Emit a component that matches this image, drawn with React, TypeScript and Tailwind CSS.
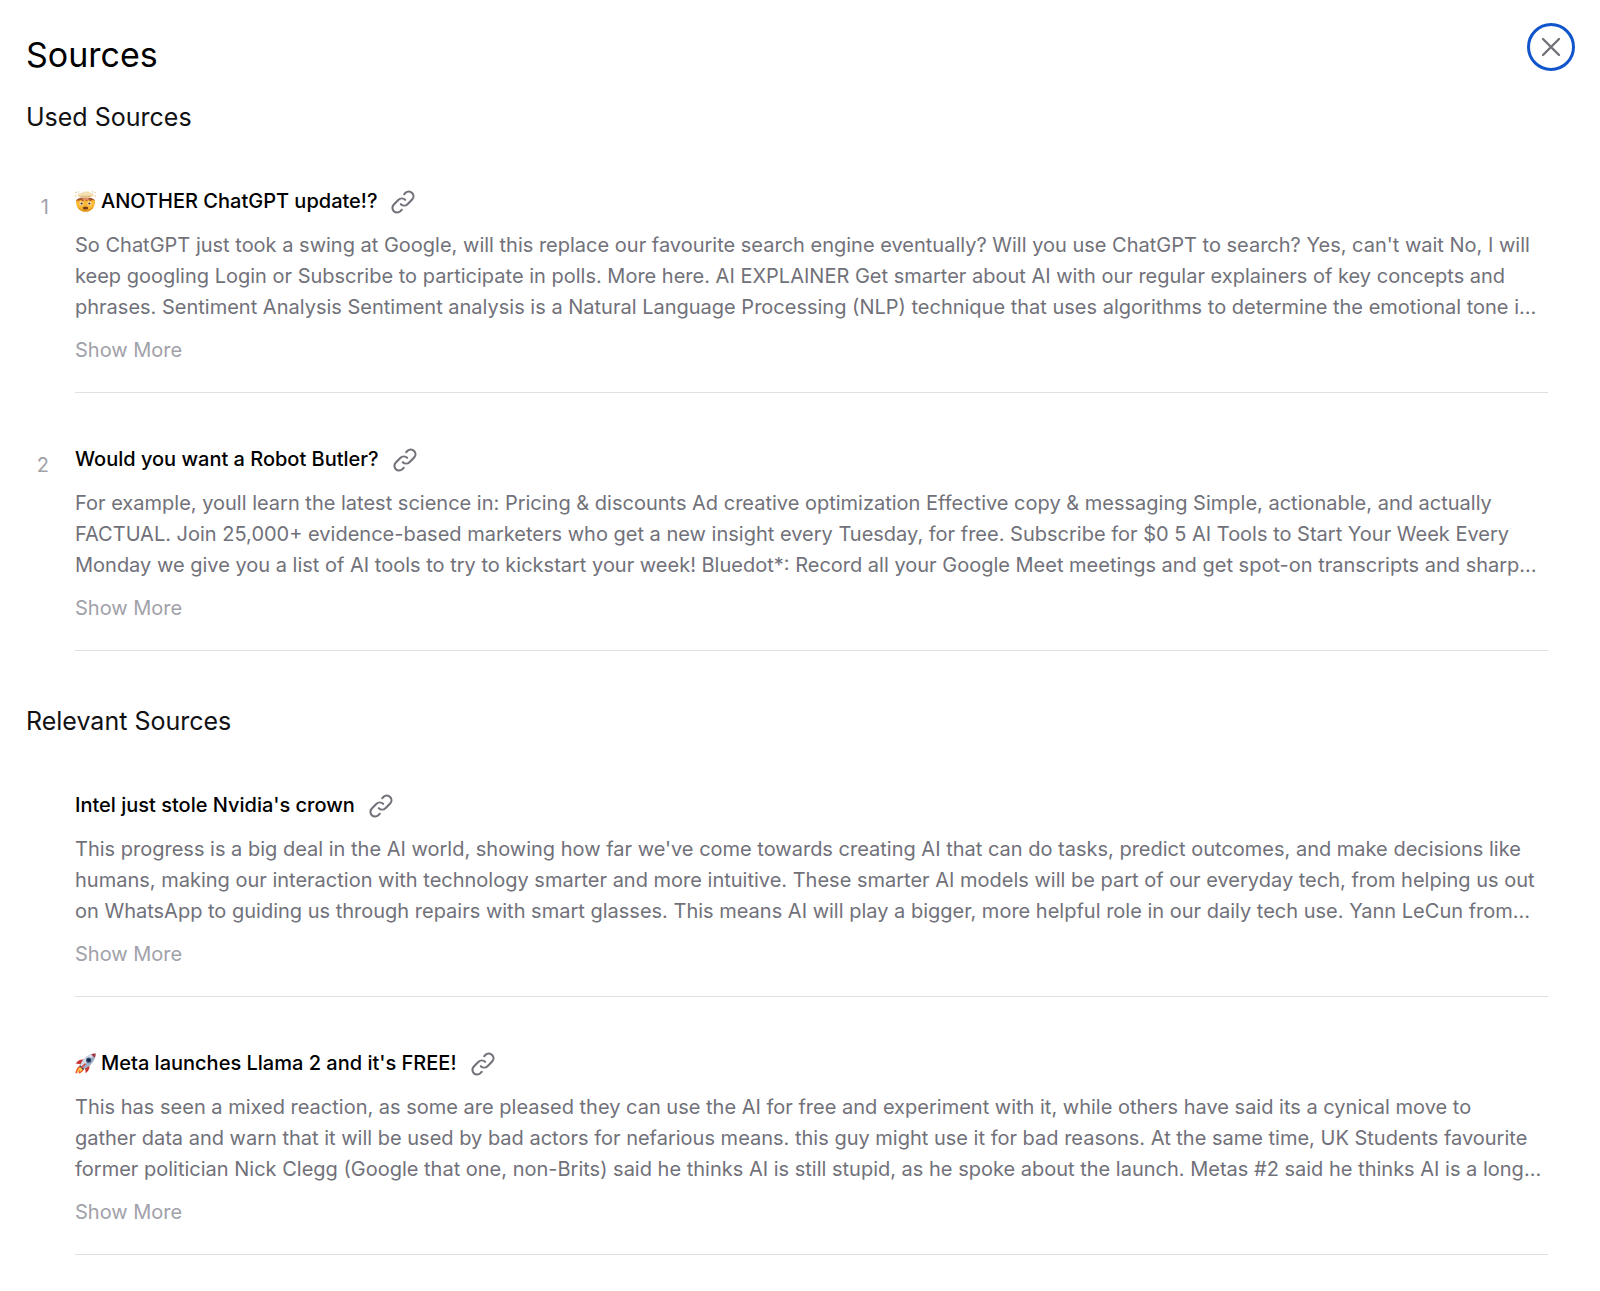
import React from 'react';

type Source = {
  id: number;
  rank?: number;
  icon?: 'mindblown' | 'rocket';
  title: string;
  excerpt: string[];
};

const USED_SOURCES: Source[] = [
  {
    id: 1,
    rank: 1,
    icon: 'mindblown',
    title: 'ANOTHER ChatGPT update!?',
    excerpt: [
      "So ChatGPT just took a swing at Google, will this replace our favourite search engine eventually? Will you use ChatGPT to search? Yes, can't wait No, I will",
      'keep googling Login or Subscribe to participate in polls. More here. AI EXPLAINER Get smarter about AI with our regular explainers of key concepts and',
      'phrases. Sentiment Analysis Sentiment analysis is a Natural Language Processing (NLP) technique that uses algorithms to determine the emotional tone i…',
    ],
  },
  {
    id: 2,
    rank: 2,
    title: 'Would you want a Robot Butler?',
    excerpt: [
      'For example, youll learn the latest science in: Pricing & discounts Ad creative optimization Effective copy & messaging Simple, actionable, and actually',
      'FACTUAL. Join 25,000+ evidence-based marketers who get a new insight every Tuesday, for free. Subscribe for $0 5 AI Tools to Start Your Week Every',
      'Monday we give you a list of AI tools to try to kickstart your week! Bluedot*: Record all your Google Meet meetings and get spot-on transcripts and sharp…',
    ],
  },
];

const RELEVANT_SOURCES: Source[] = [
  {
    id: 3,
    title: "Intel just stole Nvidia's crown",
    excerpt: [
      "This progress is a big deal in the AI world, showing how far we've come towards creating AI that can do tasks, predict outcomes, and make decisions like",
      'humans, making our interaction with technology smarter and more intuitive. These smarter AI models will be part of our everyday tech, from helping us out',
      'on WhatsApp to guiding us through repairs with smart glasses. This means AI will play a bigger, more helpful role in our daily tech use. Yann LeCun from…',
    ],
  },
  {
    id: 4,
    icon: 'rocket',
    title: "Meta launches Llama 2 and it's FREE!",
    excerpt: [
      'This has seen a mixed reaction, as some are pleased they can use the AI for free and experiment with it, while others have said its a cynical move to',
      'gather data and warn that it will be used by bad actors for nefarious means. this guy might use it for bad reasons. At the same time, UK Students favourite',
      'former politician Nick Clegg (Google that one, non-Brits) said he thinks AI is still stupid, as he spoke about the launch. Metas #2 said he thinks AI is a long…',
    ],
  },
];

const MindBlown = () => (
  <svg viewBox="0 0 20 20" className="w-[21px] h-[21px] shrink-0" aria-hidden="true">
    <path d="M.9 8.800C.5 15.600 4.600 19.800 10 19.800s9.500-4.200 9.100-11C17 7.300 13.500 6.600 10 6.600S3 7.300.9 8.800z" fill="#f9b934" />
    <path d="M2 14.500c1.600 3.400 4.500 5.300 8 5.300s6.400-1.900 8-5.300c-2 2.300-4.700 3.400-8 3.400s-6-1.100-8-3.400z" fill="#e39322" />
    <path d="M1 9C2.500 6.800 5.600 6 10 6s7.500.8 9 3l-2.600-.5-1.700 1.200-2-1.300-1.700 1.300-1.900-1.400-1.800 1.400-2-1.300-1.700.9z" fill="#a5552c" />
    <path d="M7.600 4.500h4.800l.8 3.800-3 .8-3.200-.8z" fill="#dd8f66" />
    <path d="M2.600 4.400C2.500 2.600 4.700 1.500 6.200 1.900 7.200.4 9.200 0 10.300.8c1.300-.8 3.600-.3 4.100.9 1.800-.3 3.400.9 3.100 2.500-.2 1.400-1.900 2-3.200 1.600-1.200.9-2.700.9-4 .2-1.400.8-3.200.6-4-.3-1.700.5-3.600 0-3.700-1.300z" fill="#f3dfb2" />
    <path d="M4.300 4.900c1.200.7 2.600.5 3.300-.3.900 1 3 1.100 4 .1.900.7 2.500.7 3.700-.2" fill="none" stroke="#d5aa6a" strokeWidth=".8" />
    <g fill="#e6bd78">
      <circle cx=".9" cy="1.300" r=".7" />
      <circle cx=".8" cy="4.800" r=".7" />
      <circle cx="3.300" cy=".8" r=".6" />
      <circle cx="19.100" cy="1.300" r=".7" />
      <circle cx="19.200" cy="4.800" r=".7" />
      <circle cx="16.700" cy=".8" r=".6" />
    </g>
    <circle cx="6.200" cy="12" r="1.900" fill="#fff3d6" />
    <circle cx="13.800" cy="12" r="1.900" fill="#fff3d6" />
    <circle cx="6.300" cy="12" r="1.100" fill="#5c2e10" />
    <circle cx="13.700" cy="12" r="1.100" fill="#5c2e10" />
    <ellipse cx="10" cy="16.200" rx="2.700" ry="1.500" fill="#7a3c14" />
  </svg>
);

const Rocket = () => (
  <svg viewBox="0 0 20 20" className="w-[21px] h-[21px] shrink-0" aria-hidden="true">
    <path d="M5.800 11.800C3 12 .8 15.500.3 19.500c2.300-.4 3-1.700 3.400-2.600-.1 1.200-.3 2-.1 2.800 3-.9 5.200-3.200 5.300-5.600z" fill="#f0592b" />
    <path d="M5.800 13.200c-1.800.6-3.300 2.600-4 5 1.500-.6 2.300-1.600 2.800-2.600.1.900 0 1.700-.2 2.500 1.800-.8 3-2.200 3.300-3.700z" fill="#ffd04a" />
    <path d="M8.600 6.500C5.800 5.800 2.800 7 .7 10.300c1.900-.3 3.500-.2 4.800.6z" fill="#c93432" />
    <path d="M13.600 11.600c.6 2.700-.4 5.600-3.700 7.800.3-1.900.2-3.600-.7-4.900z" fill="#c93432" />
    <path d="M5 11.500C7.200 5.600 12.600.5 19.600.4 19.700 7 14.800 12.600 8.800 15.200z" fill="#9eb0c6" />
    <path d="M5 11.500C7.200 5.600 12.600.5 19.600.4L6.800 13.300z" fill="#d3dce6" />
    <path d="M15.300 1.200c1.400-.5 2.800-.8 4.300-.8 0 1.400-.2 2.800-.7 4.200z" fill="#a93038" />
    <circle cx="13" cy="6.900" r="2.500" fill="#38537c" />
    <circle cx="13" cy="6.900" r="1.400" fill="#16253d" />
    <path d="M4.700 11.500l4.200 4.100-1.200.6-3.500-3.500z" fill="#3f4d61" />
    <path d="M9.400 9.700l1 .9-3.900 4-1-.9z" fill="#d4393a" />
  </svg>
);

const LinkIcon = () => (
  <svg viewBox="0 0 24 24" fill="none" stroke="currentColor" strokeWidth="1.800" strokeLinecap="round" strokeLinejoin="round" className="w-7 h-7" aria-hidden="true">
    <path d="M13.828 10.172a4 4 0 00-5.656 0l-4 4a4 4 0 105.656 5.656l1.102-1.101m-.758-4.899a4 4 0 005.656 0l4-4a4 4 0 00-5.656-5.656l-1.100 1.100" />
  </svg>
);

const SourceItem = ({ source }: { source: Source }) => (
  <li className="flex gap-[26px]">
    <span className="w-[23px] shrink-0 pt-[6px] text-right text-xl leading-[31px] text-[#a1a1aa]">{source.rank}</span>
    <div className="min-w-0 flex-1 border-b border-[#e0e0e3] pb-[26px]">
      <div className="flex h-[31px] items-center gap-3">
        <h3 className="flex items-center gap-[5px] text-xl leading-[31px] font-medium text-black">
          {source.icon === 'mindblown' && <MindBlown />}
          {source.icon === 'rocket' && <Rocket />}
          {source.title}
        </h3>
        <a href="#" aria-label={`Open ${source.title}`} className="text-[#71717a]">
          <LinkIcon />
        </a>
      </div>
      <p className="mt-[13px] text-xl leading-[31px] text-[#71717a]">
        {source.excerpt.map((line) => (
          <span key={line} className="block xl:whitespace-nowrap">{line}</span>
        ))}
      </p>
      <button type="button" className="mt-3 block text-xl leading-[31px] text-[#a1a1aa]">Show More</button>
    </div>
  </li>
);

const SourceSection = ({ title, sources }: { title: string; sources: Source[] }) => (
  <section>
    <h2 className="text-[25px] leading-8 text-[#111113]">{title}</h2>
    <ul className="mt-[53px] flex flex-col gap-[51px]">
      {sources.map((source) => (
        <SourceItem key={source.id} source={source} />
      ))}
    </ul>
  </section>
);

const App = () => {
  return (
    <div className="min-h-screen bg-white pt-[23px] pl-[26px] pr-[52px] pb-[36px] font-['Inter','Liberation_Sans',sans-serif]">
      <header className="-mr-[27px] flex items-start justify-between">
        <h1 className="pt-3 text-[34px] leading-10 text-black">Sources</h1>
        <button
          type="button"
          aria-label="Close"
          className="flex h-12 w-12 items-center justify-center rounded-full border-3 border-[#1155cc] text-[#71717a]"
        >
          <svg viewBox="0 0 24 24" fill="none" stroke="currentColor" strokeWidth="1.800" strokeLinecap="round" className="w-8 h-8" aria-hidden="true">
            <path d="M6 18L18 6M6 6l12 12" />
          </svg>
        </button>
      </header>
      <main className="mt-[26px] flex flex-col gap-[54px]">
        <SourceSection title="Used Sources" sources={USED_SOURCES} />
        <SourceSection title="Relevant Sources" sources={RELEVANT_SOURCES} />
      </main>
    </div>
  );
};

export default App;
